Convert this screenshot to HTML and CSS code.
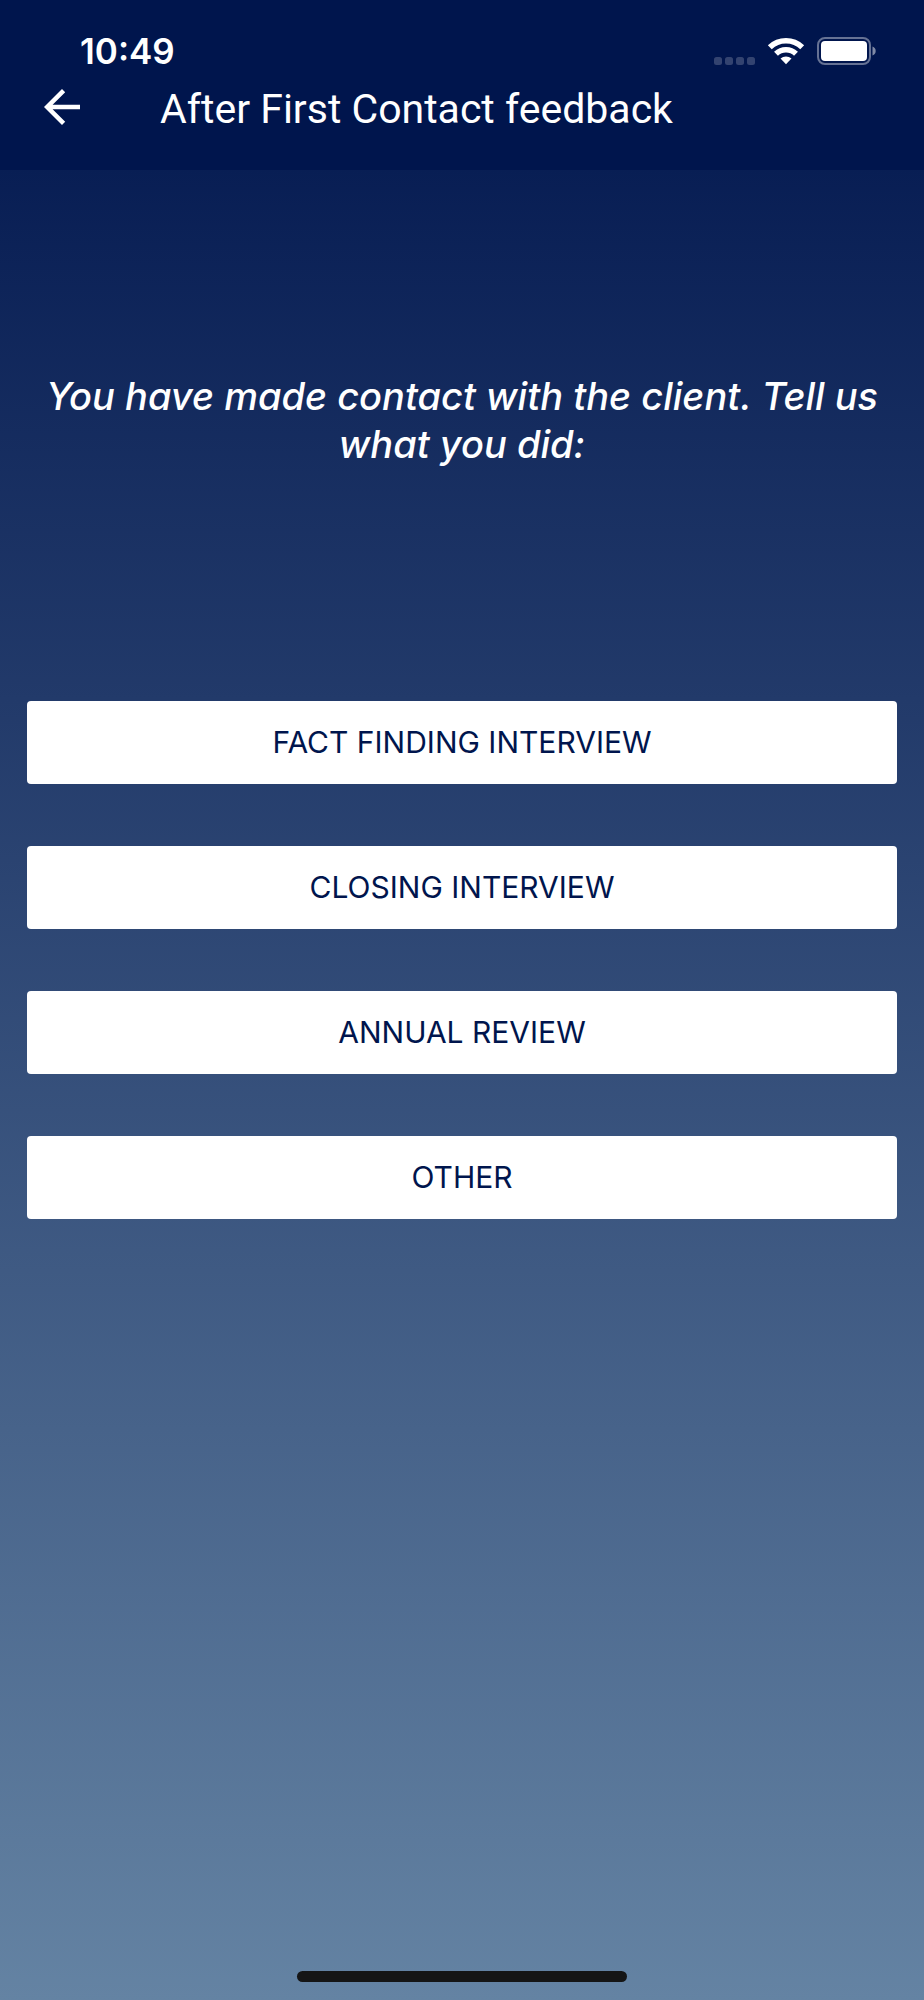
FILE: index.html
```html
<!DOCTYPE html>
<html lang="en">
<head>
  <meta charset="UTF-8">
  <meta name="viewport" content="width=device-width, initial-scale=1">
  <title>After First Contact feedback</title>
  <link rel="stylesheet" href="styles.css">
</head>
<body>
  <header>
    <div class="status-bar">
      <span class="time">10:49</span>
      <div class="status-icons">
        <svg class="signal" width="42" height="28" viewBox="0 0 42 28" aria-hidden="true">
          <rect x="1" y="20" width="8" height="8" rx="2.500"/>
          <rect x="12" y="20" width="8" height="8" rx="2.500"/>
          <rect x="23" y="20" width="8" height="8" rx="2.500"/>
          <rect x="34" y="20" width="8" height="8" rx="2.500"/>
        </svg>
        <svg width="38" height="28" viewBox="0 0 38 28" aria-hidden="true">
          <g fill="none" stroke="#fff" stroke-width="5.600">
            <path d="M2.800 10.200a23.500 23.500 0 0 1 32.400 0"/>
            <path d="M9 16.700a14.500 14.500 0 0 1 20 0"/>
          </g>
          <path d="M13.500 21.600a8 8 0 0 1 11 0L19 27.200z" fill="#fff"/>
        </svg>
        <svg width="59" height="28" viewBox="0 0 59 28" aria-hidden="true">
          <rect x="1" y="1" width="52" height="26" rx="7" fill="none" stroke="#fff" stroke-opacity=".4" stroke-width="2"/>
          <rect x="4" y="4" width="46" height="20" rx="4" fill="#fff"/>
          <path d="M55.500 9.500v9c2-.8 3.200-2.600 3.200-4.500s-1.200-3.700-3.200-4.500z" fill="#fff" fill-opacity=".5"/>
        </svg>
      </div>
    </div>
    <div class="nav-bar">
      <button class="back" type="button" aria-label="Back">
        <svg width="36" height="36" viewBox="0 0 36 36" aria-hidden="true">
          <path d="M36 15.800v4.400H8.600l12.600 12.600L18 36 0 18 18 0l3.200 3.200L8.600 15.800z" fill="#fff"/>
        </svg>
      </button>
      <h1>After First Contact feedback</h1>
    </div>
  </header>

  <main>
    <p class="message">You have made contact with the client. Tell us what you did:</p>
    <div class="options">
      <button type="button">FACT FINDING INTERVIEW</button>
      <button type="button">CLOSING INTERVIEW</button>
      <button type="button">ANNUAL REVIEW</button>
      <button type="button">OTHER</button>
    </div>
  </main>

  <footer>
    <div class="home-indicator"></div>
  </footer>
</body>
</html>
```
FILE: styles.css
```css
* {
  box-sizing: border-box;
}

body {
  display: flex;
  flex-direction: column;
  min-height: 100vh;
  margin: 0;
  background: linear-gradient(#00154d, #223a6a 35%, #6483a3);
  color: #fff;
  font-family: Inter, sans-serif;
}

header {
  height: 170px;
  padding-top: 30px;
  background-color: #00154d;
}

.status-bar {
  display: flex;
  align-items: center;
  justify-content: space-between;
  height: 41px;
  padding: 0 48px 0 80px;
}

.time {
  font-size: 35px;
  font-weight: 600;
}

.status-icons {
  display: flex;
  align-items: center;
  gap: 12px;
}

.signal {
  fill: #fff;
  fill-opacity: .2;
}

.nav-bar {
  display: flex;
  align-items: center;
  gap: 80px;
  height: 72px;
  padding: 0 44px;
}

.back {
  display: flex;
  padding: 0;
  border: 0;
  background: none;
  cursor: pointer;
}

h1 {
  margin: 0;
  padding-top: 4px;
  font-family: Roboto, sans-serif;
  font-size: 41px;
  font-weight: 400;
}

main {
  flex: 1;
  padding: 202px 27px 0;
}

.message {
  margin: 0;
  font-size: 38px;
  font-style: italic;
  font-weight: 500;
  line-height: 48px;
  text-align: center;
}

.options {
  display: flex;
  flex-direction: column;
  gap: 62px;
  margin-top: 233px;
}

.options button {
  height: 83px;
  padding: 0 0 2px;
  border: 0;
  border-radius: 4px;
  background-color: #fff;
  color: #00154d;
  font-family: inherit;
  font-size: 30px;
  cursor: pointer;
}

footer {
  padding-bottom: 18px;
}

.home-indicator {
  width: 330px;
  height: 11px;
  margin: 0 auto;
  border-radius: 6px;
  background-color: #151515;
}
```
